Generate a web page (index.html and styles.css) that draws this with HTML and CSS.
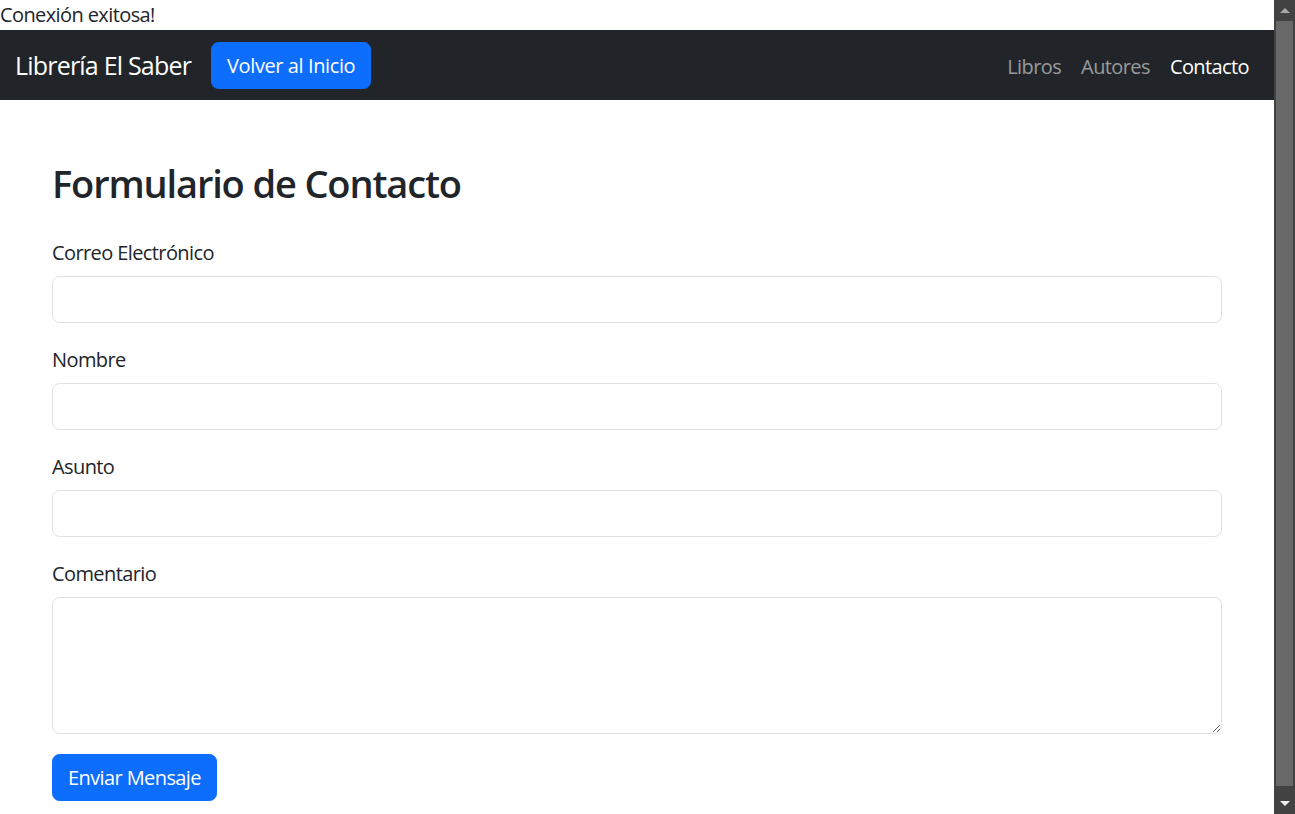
FILE: index.html
```html
<!DOCTYPE html>
<html lang="es">
<head>
<meta charset="utf-8">
<title>Contacto - Librería El Saber</title>
<link rel="stylesheet" href="styles.css">
</head>
<body>
<div class="viewport">
  <div class="status">Conexión exitosa!</div>
  <nav class="navbar">
    <div class="nav-left">
      <a class="brand" href="#">Librería El Saber</a>
      <a class="btn btn-primary btn-nav" href="#">Volver al Inicio</a>
    </div>
    <ul class="nav-links">
      <li><a class="nav-link" href="#">Libros</a></li>
      <li><a class="nav-link" href="#">Autores</a></li>
      <li><a class="nav-link active" href="#">Contacto</a></li>
    </ul>
  </nav>
  <main class="page">
    <h2 class="title">Formulario de Contacto</h2>
    <form class="form">
      <div class="field">
        <label class="label" for="email">Correo Electrónico</label>
        <input class="control" id="email" type="email">
      </div>
      <div class="field">
        <label class="label" for="nombre">Nombre</label>
        <input class="control" id="nombre" type="text">
      </div>
      <div class="field">
        <label class="label" for="asunto">Asunto</label>
        <input class="control" id="asunto" type="text">
      </div>
      <div class="field">
        <label class="label" for="comentario">Comentario</label>
        <textarea class="control area" id="comentario" rows="4"></textarea>
      </div>
      <button class="btn btn-primary" type="submit">Enviar Mensaje</button>
    </form>
  </main>
</div>
<div class="scrollbar" aria-hidden="true">
  <div class="sb-arrow"><span class="tri tri-up"></span></div>
  <div class="sb-track"><div class="sb-thumb"></div></div>
  <div class="sb-arrow"><span class="tri tri-down"></span></div>
</div>
</body>
</html>
```
FILE: styles.css
```css
* {
  box-sizing: border-box;
}
html {
  background: #fff;
}
body {
  margin: 0;
  background: #fff;
  color: #212529;
  font-family: "Open Sans", "Noto Sans", sans-serif;
  font-size: 20px;
  line-height: 30px;
  letter-spacing: -0.03em;
}
.viewport {
  width: 1274px;
}
.status {
  height: 30px;
  line-height: 30px;
}
.navbar {
  display: flex;
  align-items: center;
  justify-content: space-between;
  height: 70px;
  padding: 0 15px;
  background: #212529;
}
.nav-left {
  display: flex;
  align-items: center;
}
.brand {
  color: #fff;
  text-decoration: none;
  font-size: 25px;
  line-height: 37.5px;
  letter-spacing: -0.032em;
  margin-right: 20px;
  padding-top: 2px;
}
.btn {
  display: inline-block;
  border: 1px solid transparent;
  border-radius: 7.5px;
  padding: 8px 15px 7px;
  height: 47px;
  font-family: inherit;
  font-size: 20px;
  line-height: 30px;
  letter-spacing: -0.03em;
  text-decoration: none;
  cursor: pointer;
}
.btn-nav {
  letter-spacing: -0.02em;
}
.btn-primary {
  background: #0d6efd;
  border-color: #0d6efd;
  color: #fff;
}
.nav-links {
  display: flex;
  list-style: none;
  margin: 0;
  padding: 0;
}
.nav-link {
  display: block;
  padding: 12px 10px 8px;
  color: rgba(255, 255, 255, 0.55);
  text-decoration: none;
}
.nav-link.active {
  color: #fff;
}
.page {
  margin: 0 52px;
  padding: 60px 0 0;
}
.title {
  margin: 0 0 30px;
  font-size: 38px;
  font-weight: 600;
  line-height: 46px;
  letter-spacing: -0.03em;
}
.form {
  display: flex;
  flex-direction: column;
  align-items: flex-start;
}
.field {
  align-self: stretch;
  display: flex;
  flex-direction: column;
  margin-bottom: 20px;
}
.label {
  padding-top: 2px;
  height: 30px;
  margin-bottom: 10px;
}
.control {
  display: block;
  width: 100%;
  height: 47px;
  padding: 7px 15px;
  font-family: inherit;
  font-size: 20px;
  line-height: 30px;
  color: #212529;
  background: #fff;
  border: 1px solid #dee2e6;
  border-radius: 7.5px;
  outline: none;
}
.area {
  height: 137px;
  resize: vertical;
}
.scrollbar {
  position: fixed;
  top: 0;
  right: 0;
  width: 21px;
  height: 100%;
  background: #424242;
  display: flex;
  flex-direction: column;
}
.sb-arrow {
  height: 21px;
  display: flex;
  align-items: center;
  justify-content: center;
}
.sb-track {
  flex: 1;
  padding: 0 2px;
}
.sb-thumb {
  height: 765px;
  background: #686868;
}
.tri {
  width: 0;
  height: 0;
  border-left: 5px solid transparent;
  border-right: 5px solid transparent;
}
.tri-up {
  border-bottom: 5px solid #a8a8a8;
}
.tri-down {
  border-top: 5px solid #f0f0f0;
}
```
